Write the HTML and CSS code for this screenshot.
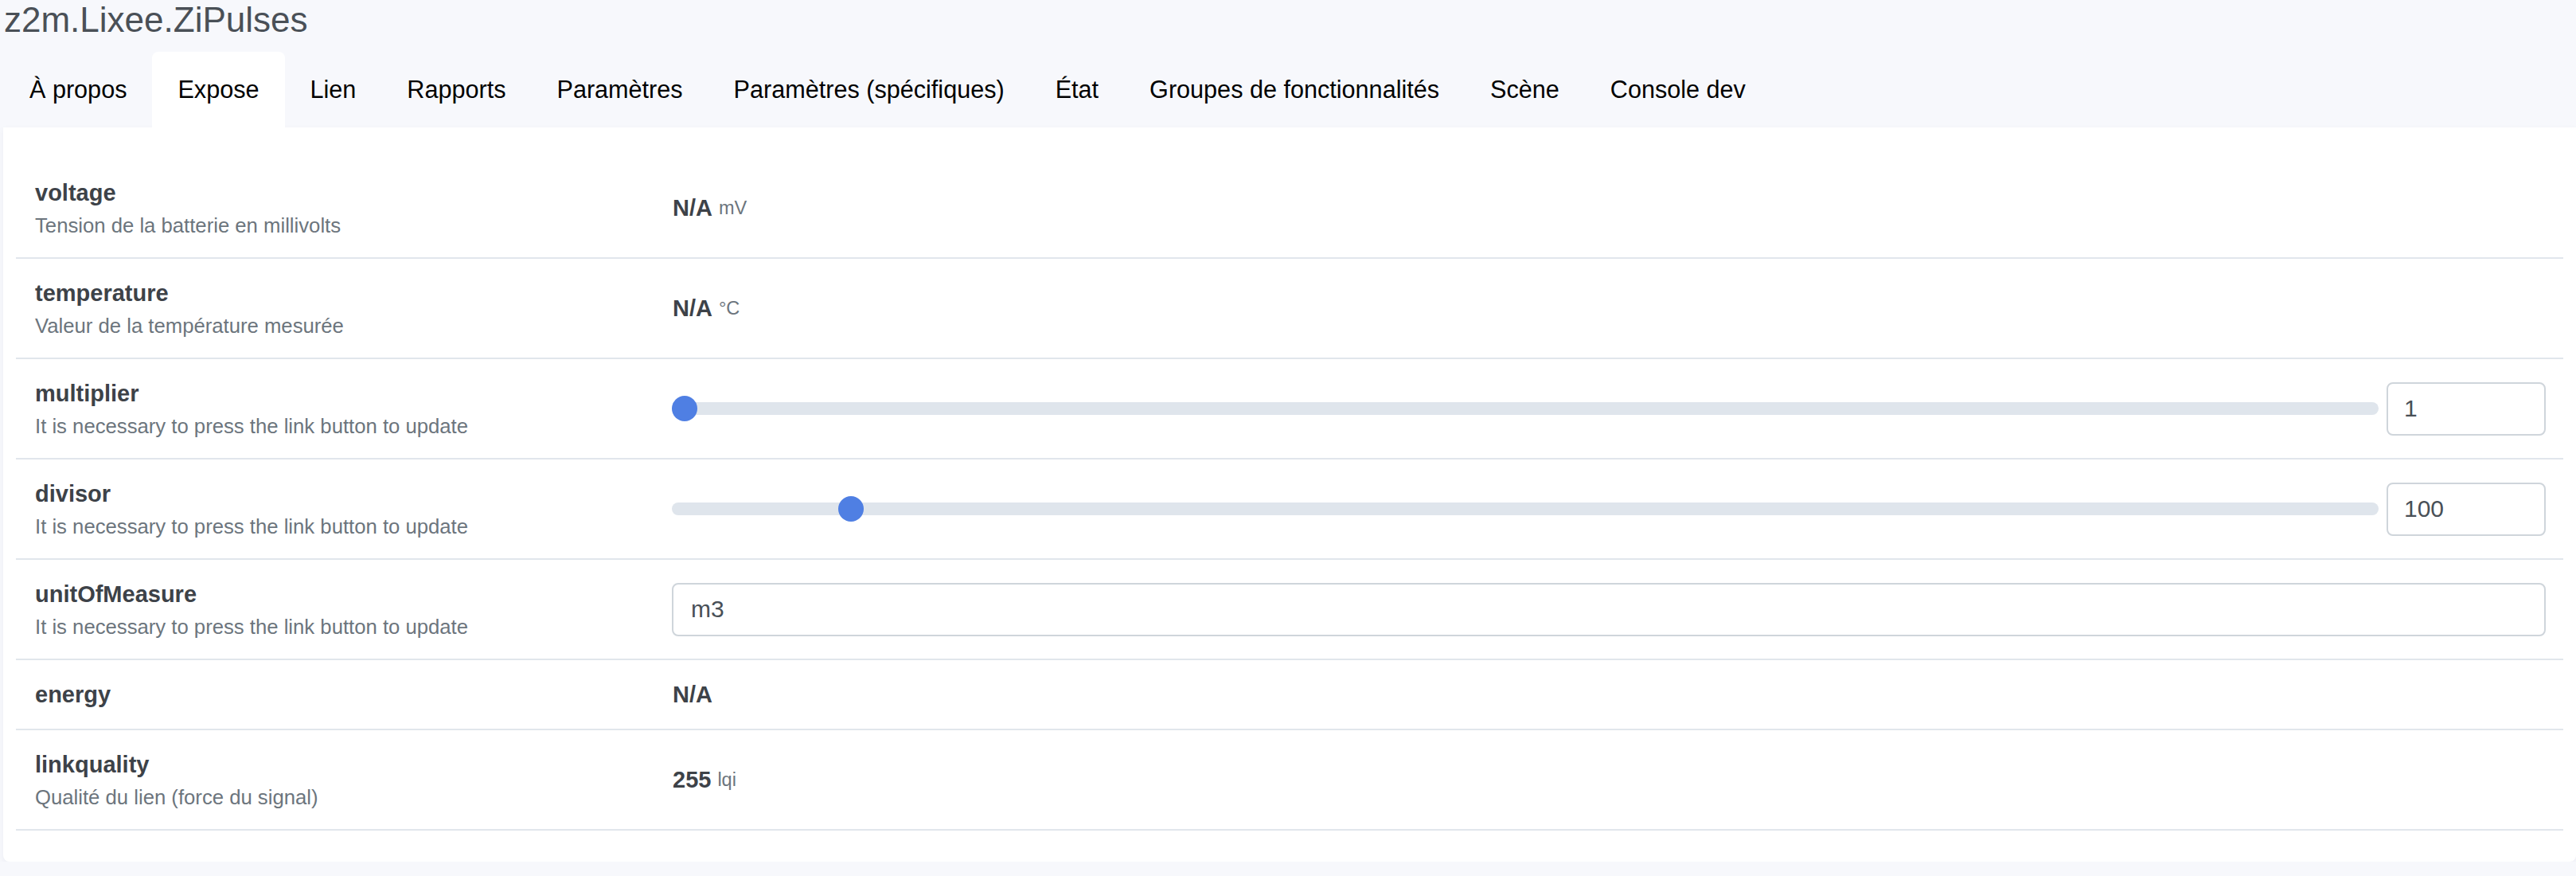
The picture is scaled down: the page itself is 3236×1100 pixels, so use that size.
FILE: index.html
```html
<!DOCTYPE html>
<html lang="fr">
<head>
<meta charset="utf-8">
<title>z2m.Lixee.ZiPulses</title>
<link rel="stylesheet" href="styles.css">
</head>
<body>
<div class="page">
  <h1 class="title">z2m.Lixee.ZiPulses</h1>
  <nav class="tabs">
    <a class="tab">À propos</a>
    <a class="tab active">Expose</a>
    <a class="tab">Lien</a>
    <a class="tab">Rapports</a>
    <a class="tab">Paramètres</a>
    <a class="tab">Paramètres (spécifiques)</a>
    <a class="tab">État</a>
    <a class="tab">Groupes de fonctionnalités</a>
    <a class="tab">Scène</a>
    <a class="tab">Console dev</a>
  </nav>
  <div class="card">
    <div class="row">
      <div class="cell-label">
        <div class="label">voltage</div>
        <div class="desc">Tension de la batterie en millivolts</div>
      </div>
      <div class="cell-value"><span class="val">N/A</span><span class="unit">mV</span></div>
    </div>
    <div class="row">
      <div class="cell-label">
        <div class="label">temperature</div>
        <div class="desc">Valeur de la température mesurée</div>
      </div>
      <div class="cell-value"><span class="val">N/A</span><span class="unit">°C</span></div>
    </div>
    <div class="row">
      <div class="cell-label">
        <div class="label">multiplier</div>
        <div class="desc">It is necessary to press the link button to update</div>
      </div>
      <div class="cell-value">
        <div class="range-group">
          <input class="range" type="range" min="1" max="1000" value="1">
          <input class="num" type="text" value="1">
        </div>
      </div>
    </div>
    <div class="row">
      <div class="cell-label">
        <div class="label">divisor</div>
        <div class="desc">It is necessary to press the link button to update</div>
      </div>
      <div class="cell-value">
        <div class="range-group">
          <input class="range" type="range" min="1" max="1000" value="100">
          <input class="num" type="text" value="100">
        </div>
      </div>
    </div>
    <div class="row">
      <div class="cell-label">
        <div class="label">unitOfMeasure</div>
        <div class="desc">It is necessary to press the link button to update</div>
      </div>
      <div class="cell-value">
        <input class="text-input" type="text" value="m3">
      </div>
    </div>
    <div class="row">
      <div class="cell-label">
        <div class="label">energy</div>
      </div>
      <div class="cell-value"><span class="val">N/A</span></div>
    </div>
    <div class="row">
      <div class="cell-label">
        <div class="label">linkquality</div>
        <div class="desc">Qualité du lien (force du signal)</div>
      </div>
      <div class="cell-value"><span class="val">255</span><span class="unit">lqi</span></div>
    </div>
  </div>
</div>
</body>
</html>
```
FILE: styles.css
```css
* { box-sizing: border-box; }

html, body {
  margin: 0;
  padding: 0;
}

body {
  background: #f7f8fc;
  font-family: "Liberation Sans", Arial, Helvetica, sans-serif;
  color: #495057;
  overflow: hidden;
}

.page {
  padding-left: 4px;
}

.title {
  margin: 0;
  font-size: 44px;
  line-height: 50px;
  font-weight: 400;
  color: #4a5057;
  padding-left: 1px;
}

.tabs {
  display: flex;
  margin-top: 15px;
  padding-left: 1px;
}

.tab {
  display: block;
  height: 95px;
  line-height: 95px;
  padding: 0 32px;
  font-size: 30.6px;
  color: #000;
  border-radius: 8px 8px 0 0;
  white-space: nowrap;
}

.tab.active {
  background: #fff;
}

.card {
  background: #fff;
  border-radius: 0 0 8px 8px;
  padding: 39px 16px 39px;
  box-shadow: 0 3px 8px rgba(30, 40, 80, 0.05);
}

.row {
  display: flex;
  border-bottom: 2px solid #e1e6ec;
}

.cell-label {
  width: 25%;
  flex: none;
  padding: 22px 24px;
}

.row-single .cell-label {
  padding: 21px 24px;
}

.label {
  font-size: 29px;
  line-height: 42px;
  font-weight: 700;
  color: #3d4248;
}

.desc {
  margin-top: 2px;
  font-size: 25.7px;
  line-height: 36px;
  color: #6c757d;
}

.cell-value {
  flex: 1;
  display: flex;
  align-items: center;
  padding: 0 22px 0 24px;
}

.val {
  font-size: 29px;
  font-weight: 700;
  color: #3d4248;
  padding-left: 1px;
}

.unit {
  font-size: 23.5px;
  color: #6c757d;
  margin-left: 8px;
}

.range-group {
  display: flex;
  align-items: center;
  gap: 10px;
  width: 100%;
}

.range {
  -webkit-appearance: none;
  appearance: none;
  flex: 1;
  margin: 0;
  height: 32px;
  background: transparent;
}

.range::-webkit-slider-runnable-track {
  height: 16px;
  border-radius: 8px;
  background: #dfe5ec;
}

.range::-webkit-slider-thumb {
  -webkit-appearance: none;
  appearance: none;
  width: 32px;
  height: 32px;
  margin-top: -8px;
  border-radius: 50%;
  background: #4f7fe3;
  border: none;
}

.num,
.text-input {
  height: 67px;
  border: 2px solid #cfd5db;
  border-radius: 8px;
  padding: 0 22px;
  font-family: "Liberation Sans", Arial, Helvetica, sans-serif;
  font-size: 30px;
  color: #495057;
  background: #fff;
  outline: none;
}

.num {
  width: 200px;
  flex: none;
  padding: 0 20px;
}

.text-input {
  width: 100%;
}
```
